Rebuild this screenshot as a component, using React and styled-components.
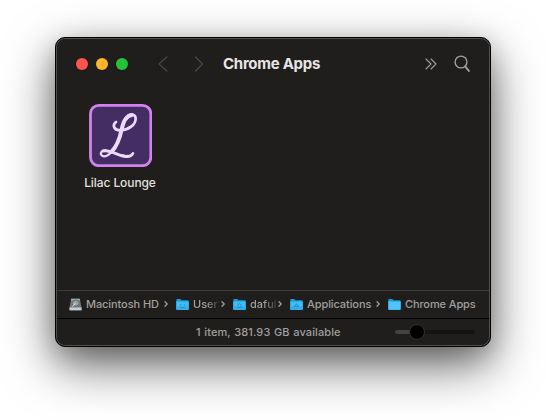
import React from "react";
import styled, { createGlobalStyle } from "styled-components";

const GlobalStyle = createGlobalStyle`
  * { box-sizing: border-box; }
  body { margin: 0; background: #fff; overflow: hidden; }
`;

const Desktop = styled.main`
  width: 546px;
  height: 420px;
  padding: 37px 55px 0;
  overflow: hidden;
  background: #fff;
  font-family: Inter, "Liberation Sans", sans-serif;
`;

const Window = styled.section`
  display: flex;
  flex-direction: column;
  width: 436px;
  height: 310px;
  border: 1px solid #000;
  border-radius: 10px;
  background: #1f1e1c;
  box-shadow: inset 0 0 0 1px #50504f, 0 18px 50px rgba(0, 0, 0, 0.6), 0 8px 24px rgba(0, 0, 0, 0.2);
`;

const TitleBar = styled.header`
  display: flex;
  align-items: center;
  height: 52px;
  padding: 0 20px 0 20px;
`;

const Lights = styled.div`
  display: flex;
  gap: 8px;
`;

const Light = styled.span`
  width: 12px;
  height: 12px;
  border-radius: 50%;
  background: ${(p) => p.$color};
`;

const Navigation = styled.nav`
  display: flex;
  gap: 26px;
  margin-left: 29.5px;
  color: #484745;
`;

const Title = styled.h1`
  width: 100px;
  margin: 0 auto 0 19.5px;
  color: #e7e6e5;
  font-size: 15px;
  font-weight: 700;
  line-height: 20px;
  letter-spacing: ${(p) => p.$spacing}px;
  white-space: nowrap;
`;

const Tools = styled.div`
  display: flex;
  align-items: center;
  gap: 17px;
  color: #a09f9d;
`;

const Icon = styled.svg`
  display: block;
  flex: none;
  fill: none;
  stroke: currentColor;
  stroke-linecap: round;
  stroke-linejoin: round;
`;

const Content = styled.div`
  flex: 1;
  padding: 13px 24px 0;
`;

const AppItem = styled.figure`
  display: flex;
  flex-direction: column;
  align-items: center;
  width: 80px;
  margin: 0;
`;

const AppName = styled.figcaption`
  margin-top: 8px;
  color: #e2e1df;
  font-size: 12px;
  font-weight: 450;
  line-height: 16px;
  letter-spacing: ${(p) => p.$spacing}px;
  white-space: nowrap;
`;

const PathBar = styled.nav`
  display: flex;
  align-items: center;
  height: 28px;
  margin: 0 1px;
  padding: 0 0 1px 11.5px;
  border-top: 1px solid #3c3b3a;
  color: #a09f9d;
`;

const Crumb = styled.div`
  display: flex;
  align-items: center;
  flex: none;
  width: ${(p) => p.$width}px;
`;

const CrumbText = styled.span`
  width: ${(p) => p.$width}px;
  margin-left: 4.5px;
  font-size: 11px;
  font-weight: 500;
  line-height: 16px;
  letter-spacing: ${(p) => p.$spacing}px;
  white-space: nowrap;
  ${(p) => p.$faded && "mask-image: linear-gradient(to right, #000 50%, transparent 105%);"}
`;

const StatusBar = styled.footer`
  display: flex;
  align-items: center;
  height: 28px;
  margin: 0 1px;
  padding: 0 14px 1px 139px;
  border-top: 1px solid #000;
`;

const Status = styled.span`
  color: #a09f9d;
  font-size: 11px;
  font-weight: 500;
  line-height: 16px;
  letter-spacing: ${(p) => p.$spacing}px;
  word-spacing: 0.5px;
  white-space: nowrap;
`;

const Slider = styled.div`
  display: flex;
  align-items: center;
  width: 80px;
  height: 4px;
  margin-left: auto;
  padding-left: 14px;
  border-radius: 2px;
  background: linear-gradient(to right, #444341 20px, #131312 20px);
`;

const Knob = styled.span`
  flex: none;
  width: 16px;
  height: 16px;
  border: 1px solid #30302f;
  border-radius: 50%;
  background: #000;
`;

const Drive = () => (
  <svg width="13" height="13" viewBox="0 0 13 13">
    <path d="M2.2.7h8.6L12.5 9.5v2.8H.5V9.5z" fill="#75797b" />
    <path d="M2.2.7h8.6l.3 1.7H1.9z" fill="#a3a8aa" />
    <path d="M.5 9.5h12v2.8H.5z" fill="#c0d0d5" />
    <ellipse cx="6.7" cy="5.2" rx="3.6" ry="3.1" fill="#9ba0a3" stroke="#555a5c" strokeWidth=".7" />
    <path d="M3.2 8.6l3.6-3.5" stroke="#dce0e2" strokeWidth="1" />
  </svg>
);

const emblems = {
  users: "M4.7 6v2M8.3 6v2M4.5 9.2q2 1.2 4 0",
  home: "M4.3 7.5l2.2-2 2.2 2M5 7.5v2.2h3V7.5",
  apps: "M4.4 9.3l2.1-3.7 2.1 3.7M4 8.2h5",
};

const Folder = ({ kind }) => (
  <svg width="13" height="13" viewBox="0 0 13 13">
    <path d="M.3 2Q.3 1 1.3 1h3l1.2 1.2h6.2q1 0 1 1V11q0 1-1 1H1.3q-1 0-1-1z" fill="#189ad8" />
    <path d="M.3 3.6h12.4V11q0 .8-1 .8H1.3q-1 0-1-.8z" fill={kind ? "#40bdf6" : "#51c3fb"} />
    {kind && <path d="M.3 8.5h12.4V11q0 .8-1 .8H1.3q-1 0-1-.8z" fill="#30aeea" />}
    {kind && <path d={emblems[kind]} fill="none" stroke="#147fb8" strokeWidth="1" opacity=".6" />}
  </svg>
);

const Separator = () => (
  <Icon width="4" height="6" viewBox="0 0 4 6" strokeWidth="1.3">
    <path d="M1 .8L3.2 3 1 5.2" />
  </Icon>
);

const crumbs = [
  { label: "Macintosh HD", cell: 107, text: 78, spacing: -0.09 },
  { label: "User", kind: "users", cell: 57, text: 28, spacing: 0, faded: true },
  { label: "daful", kind: "home", cell: 57, text: 28, spacing: 0, faded: true },
  { label: "Applications", kind: "apps", cell: 98, text: 69, spacing: -0.09 },
  { label: "Chrome Apps", kind: "", cell: 92, text: 74, spacing: -0.12 },
];

const LoungeLogo = () => (
  <svg width="64" height="64" viewBox="42 24 192 192">
    <rect x="49.5" y="31" width="181" height="181" rx="25" fill="#432d62" stroke="#d281ee" strokeWidth="8.5" />
    <g fill="none" stroke="#ecd9fc" strokeLinecap="round" strokeLinejoin="round">
      <path d="M126 81C114 90 119 107 140 106C166 104 185 88 185 71C185 59 175 56 164 61" strokeWidth="8" />
      <path d="M174 60C155 62 147 83 143 103C137 132 128 154 113 170" strokeWidth="12" />
      <path d="M113 170C105 181 92 188 83 181C77 174 83 165 95 166" strokeWidth="6.5" />
      <path d="M87 168C111 162 139 189 161 184" strokeWidth="9" />
      <path d="M142 181C159 187 172 184 177 175" strokeWidth="8" />
    </g>
  </svg>
);

export default function App() {
  return (
    <>
      <GlobalStyle />
      <Desktop>
        <Window>
          <TitleBar>
            <Lights>
              <Light $color="#ff544d" />
              <Light $color="#ffb429" />
              <Light $color="#25c438" />
            </Lights>
            <Navigation>
              <Icon width="10" height="16" viewBox="0 0 10 16" strokeWidth="1.3"><path d="M9 1L1 8l8 7" /></Icon>
              <Icon width="10" height="16" viewBox="0 0 10 16" strokeWidth="1.3"><path d="M1.5 1L8.5 8l-7 7" /></Icon>
            </Navigation>
            <Title $spacing={-0.27}>Chrome Apps</Title>
            <Tools>
              <Icon width="12" height="12" viewBox="0 0 12 12" strokeWidth="1.1"><path d="M1 1l5 5-5 5M6 1l5 5-5 5" /></Icon>
              <Icon width="16" height="18" viewBox="0 0 16 18" strokeWidth="1.4"><circle cx="7" cy="7" r="5.9" /><path d="M11.2 11.4l3.6 4.5" strokeWidth="1.9" /></Icon>
            </Tools>
          </TitleBar>
          <Content>
            <AppItem>
              <LoungeLogo />
              <AppName $spacing={-0.09}>Lilac Lounge</AppName>
            </AppItem>
          </Content>
          <PathBar>
            {crumbs.map((c, i) => (
              <Crumb key={c.label} $width={c.cell}>
                {i === 0 ? <Drive /> : <Folder kind={c.kind} />}
                <CrumbText $width={c.text} $spacing={c.spacing} $faded={c.faded}>{c.label}</CrumbText>
                {i < crumbs.length - 1 && <Separator />}
              </Crumb>
            ))}
          </PathBar>
          <StatusBar>
            <Status $spacing={0.12}>1 item, 381.93 GB available</Status>
            <Slider><Knob /></Slider>
          </StatusBar>
        </Window>
      </Desktop>
    </>
  );
}
